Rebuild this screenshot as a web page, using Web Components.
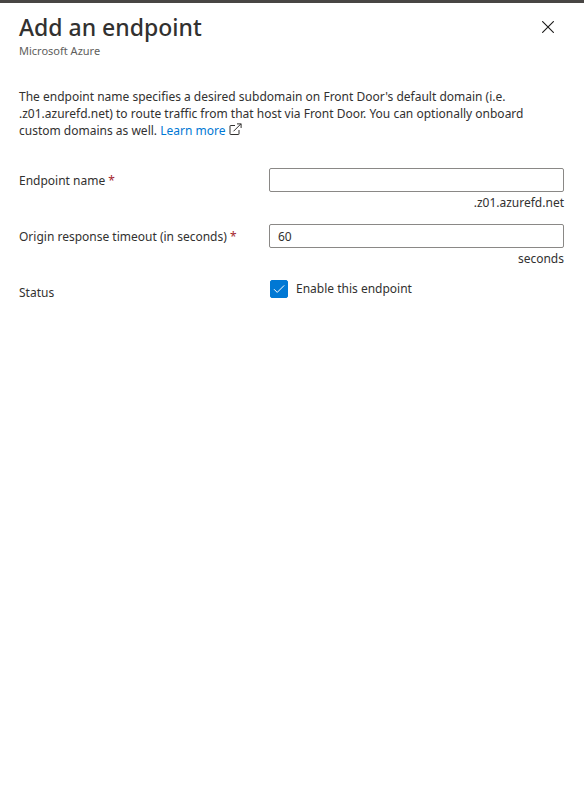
<!DOCTYPE html>
<html lang="en">
<head>
<meta charset="utf-8">
<meta name="viewport" content="width=device-width, initial-scale=1">
<title>Add an endpoint</title>
<style>
  body {
    margin: 0;
    background: #fff;
    color: #323130;
    font: 12px/17px "Noto Sans", "Open Sans", sans-serif;
  }
</style>
</head>
<body>
<endpoint-blade>
  <blade-header heading="Add an endpoint" subtitle="Microsoft Azure"></blade-header>
  <blade-intro link="Learn more" href="#learn-more">The endpoint name specifies a desired subdomain on Front Door's default domain (i.e. .z01.azurefd.net) to route traffic from that host via Front Door. You can optionally onboard custom domains as well.</blade-intro>
  <text-field label="Endpoint name" suffix=".z01.azurefd.net" value="" required></text-field>
  <text-field label="Origin response timeout (in seconds)" suffix="seconds" value="60" required></text-field>
  <check-field label="Status" option="Enable this endpoint"></check-field>
</endpoint-blade>

<script>
class BladeElement extends HTMLElement {
  render(markup) {
    this.attachShadow({ mode: "open" }).innerHTML = markup;
  }
}

customElements.define("endpoint-blade", class extends BladeElement {
  constructor() {
    super();
    this.render(`
      <style>
        :host {
          display: block;
          box-sizing: border-box;
          min-height: 100vh;
          border-top: 3px solid #484644;
          padding: 8px 20px 20px 19px;
          background: #fff;
        }
      </style>
      <slot></slot>`);
  }
});

customElements.define("blade-header", class extends BladeElement {
  connectedCallback() {
    this.render(`
      <style>
        :host { display: flex; justify-content: space-between; align-items: flex-start; }
        h1 { margin: 0; font-size: 23px; line-height: 32px; font-weight: 500; }
        p { margin: 0; font-size: 11px; line-height: 16px; color: #605e5c; }
        button {
          display: grid;
          place-items: center;
          width: 32px;
          height: 32px;
          padding: 0;
          border: 0;
          background: none;
          color: #1b1a19;
          cursor: pointer;
        }
      </style>
      <div>
        <h1>${this.getAttribute("heading")}</h1>
        <p>${this.getAttribute("subtitle")}</p>
      </div>
      <button type="button" aria-label="Close">
        <svg width="12" height="12" viewBox="0 0 12 12" fill="none" stroke="currentColor" stroke-width="1.1" aria-hidden="true">
          <path d="M0.2 0.2 11.8 11.8M11.8 0.2 0.2 11.8"/>
        </svg>
      </button>`);
  }
});

customElements.define("blade-intro", class extends BladeElement {
  connectedCallback() {
    this.render(`
      <style>
        :host { display: block; margin: 29px 0; }
        p { margin: 0; }
        a { color: #0078d4; text-decoration: none; white-space: nowrap; }
        svg { margin-left: 4px; color: #323130; vertical-align: -1px; }
      </style>
      <p><slot></slot> <a href="${this.getAttribute("href")}">${this.getAttribute("link")}<svg width="13" height="13" viewBox="0 0 13 13" fill="none" stroke="currentColor" aria-hidden="true">
        <path d="M6 2.5H1.5Q1 2.5 1 3V11Q1 11.5 1.5 11.5H9.5Q10 11.5 10 11V7M4.5 8.3 12 0.8M8 0.9H12.1V5"/>
      </svg></a></p>`);
  }
});

const rowStyles = `
  :host {
    display: grid;
    grid-template-columns: 250px minmax(0, 1fr);
    min-height: 56px;
  }
  .name { line-height: 26px; }
`;

customElements.define("text-field", class extends BladeElement {
  connectedCallback() {
    const required = this.hasAttribute("required");
    this.render(`
      <style>
        ${rowStyles}
        .star { color: #a4262c; }
        input {
          display: block;
          box-sizing: border-box;
          width: 100%;
          height: 24px;
          padding: 0 8px;
          border: 1px solid #8a8886;
          border-radius: 2px;
          background: #fff;
          color: inherit;
          font: inherit;
        }
        .suffix { text-align: right; line-height: 22px; }
      </style>
      <label class="name" for="field">${this.getAttribute("label")}${required ? ' <span class="star">*</span>' : ""}</label>
      <div>
        <input id="field" type="text" value="${this.getAttribute("value")}" aria-describedby="suffix" ${required ? "required" : ""}>
        <div class="suffix" id="suffix">${this.getAttribute("suffix")}</div>
      </div>`);
  }
});

customElements.define("check-field", class extends BladeElement {
  connectedCallback() {
    this.render(`
      <style>
        ${rowStyles}
        .option { display: flex; align-items: flex-start; gap: 8px; padding-left: 1px; line-height: 17px; }
        input {
          appearance: none;
          display: block;
          flex: none;
          width: 18px;
          height: 18px;
          margin: 0;
          border: 1px solid #8a8886;
          border-radius: 2px;
          background: #fff;
        }
        input:checked {
          border-color: #0078d4;
          background: #0078d4 url('data:image/svg+xml,<svg xmlns="http://www.w3.org/2000/svg" viewBox="0 0 16 16" fill="none" stroke="white"><path d="M3 8.2 6.2 11.4 13.2 4.4"/></svg>') center / 16px 16px no-repeat;
        }
      </style>
      <span class="name" id="name">${this.getAttribute("label")}</span>
      <label class="option">
        <input type="checkbox" checked aria-describedby="name">
        <span>${this.getAttribute("option")}</span>
      </label>`);
  }
});
</script>
</body>
</html>
